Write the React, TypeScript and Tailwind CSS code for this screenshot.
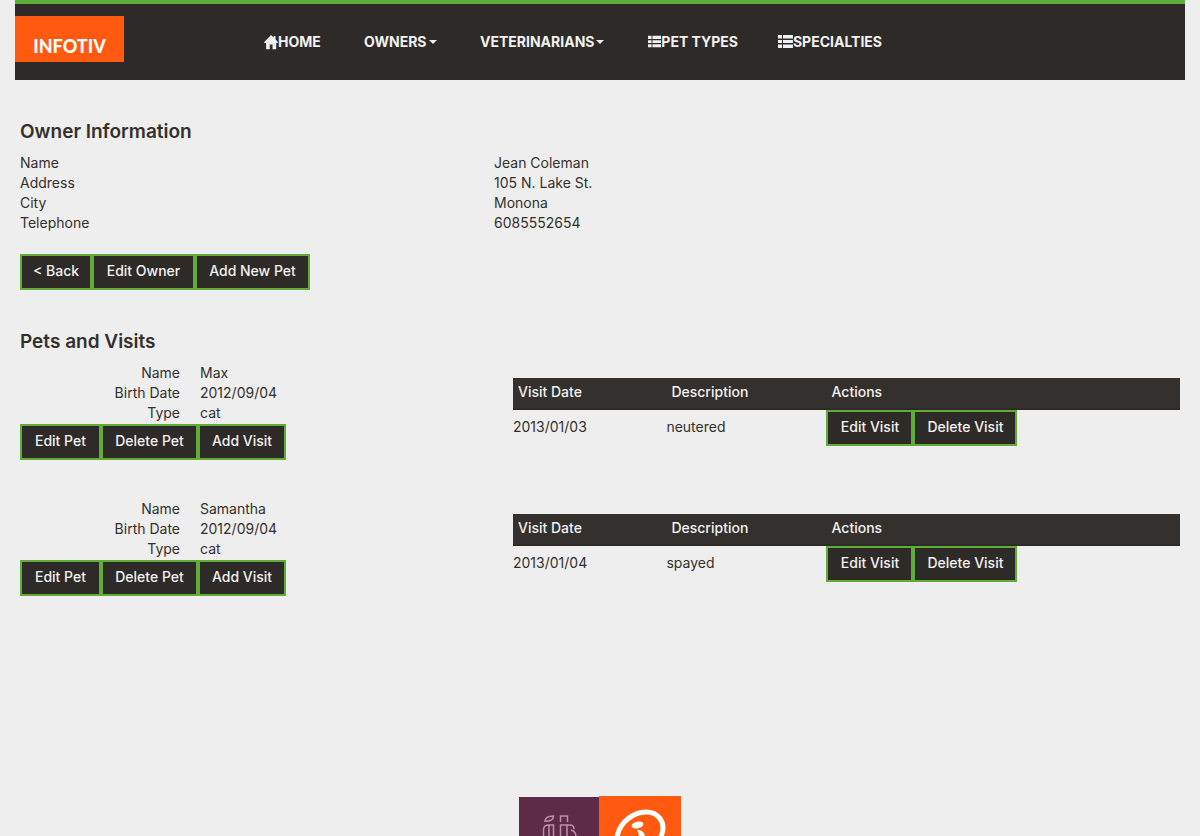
import React from "react";

type Pet = {
  name: string;
  birthDate: string;
  type: string;
  visits: { date: string; description: string }[];
};

const owner = [
  ["Name", "Jean Coleman"],
  ["Address", "105 N. Lake St."],
  ["City", "Monona"],
  ["Telephone", "6085552654"],
];

const pets: Pet[] = [
  {
    name: "Max",
    birthDate: "2012/09/04",
    type: "cat",
    visits: [{ date: "2013/01/03", description: "neutered" }],
  },
  {
    name: "Samantha",
    birthDate: "2012/09/04",
    type: "cat",
    visits: [{ date: "2013/01/04", description: "spayed" }],
  },
];

function ActionButton({ label, width }: { label: string; width: string }) {
  return (
    <button
      type="button"
      className={`h-9 shrink-0 whitespace-nowrap border-2 border-[#5fad37] bg-[#2e2a27] pb-0.5 text-center text-sm leading-5 font-medium text-[#f1f1f1] ${width}`}
    >
      {label}
    </button>
  );
}

function HomeIcon() {
  return (
    <svg width="14" height="15" viewBox="0 0 14 15" fill="currentColor" aria-hidden="true">
      <path d="M7 0 9.7 2.6V1.1h1.8v3.2L14 7.2l-.5.7h-1.3V14.2H8.5V9.6H5.8v4.6H2.1V7.9H.5L0 7.2Z" />
    </svg>
  );
}

function ListIcon() {
  return (
    <svg width="15" height="14" viewBox="0 0 15 14" fill="currentColor" aria-hidden="true">
      <path d="M0 0h4v3.5H0zM5 0h10v3.5H5zM0 4.9h4v3.2H0zM5 4.9h10v3.2H5zM0 9.5h4V13H0zM5 9.5h10V13H5z" />
    </svg>
  );
}

function Caret() {
  return (
    <svg className="ml-0.5" width="8" height="4" viewBox="0 0 8 4" fill="currentColor" aria-hidden="true">
      <path d="M0 0h8L4 4z" />
    </svg>
  );
}

function NavLink({
  label,
  icon,
  caret,
  width,
}: {
  label: string;
  icon?: React.ReactNode;
  caret?: boolean;
  width: string;
}) {
  return (
    <li className={width}>
      <a
        href="#"
        className="flex items-center whitespace-nowrap px-5 py-7 text-sm leading-5 font-bold text-[#f1f1f1]"
      >
        {icon}
        {label}
        {caret && <Caret />}
      </a>
    </li>
  );
}

function PetRow({ pet }: { pet: Pet }) {
  return (
    <div className="flex items-start">
      <div className="w-[42.5%] shrink-0">
        <dl className="grid grid-cols-[160px_1fr] gap-x-5 leading-5">
          <dt className="text-right">Name</dt>
          <dd>{pet.name}</dd>
          <dt className="text-right">Birth Date</dt>
          <dd>{pet.birthDate}</dd>
          <dt className="text-right">Type</dt>
          <dd>{pet.type}</dd>
        </dl>
        <div className="mt-px flex">
          <ActionButton label="Edit Pet" width="w-[81px]" />
          <ActionButton label="Delete Pet" width="w-[97px]" />
          <ActionButton label="Add Visit" width="w-[88px]" />
        </div>
      </div>
      <table className="mt-[15px] grow table-fixed border-separate border-spacing-0 text-left">
        <colgroup>
          <col className="w-[23%]" />
          <col className="w-[24%]" />
          <col />
        </colgroup>
        <thead>
          <tr className="bg-[#34302d] text-[#f1f1f1]">
            <th className="h-8 border-b-2 border-[#2e2a27] px-[5px] pt-0 pb-0.5 font-medium">Visit Date</th>
            <th className="h-8 border-b-2 border-[#2e2a27] px-[5px] pt-0 pb-0.5 font-medium">Description</th>
            <th className="h-8 border-b-2 border-[#2e2a27] px-[5px] pt-0 pb-0.5 font-medium">Actions</th>
          </tr>
        </thead>
        <tbody>
          {pet.visits.map((visit) => (
            <tr key={visit.date}>
              <td className="p-0 pb-0.5">{visit.date}</td>
              <td className="p-0 pb-0.5">{visit.description}</td>
              <td className="p-0">
                <div className="flex">
                  <ActionButton label="Edit Visit" width="w-[87px]" />
                  <ActionButton label="Delete Visit" width="w-[104px]" />
                </div>
              </td>
            </tr>
          ))}
        </tbody>
      </table>
    </div>
  );
}

export default function App() {
  return (
    <div className="flex min-h-screen flex-col bg-[#eeeeee] px-[15px] font-['Inter','Liberation_Sans',sans-serif] text-sm text-[#34302d]">
      <header className="flex border-t-4 border-[#5fad37] bg-[#2e2a27]">
        <div className="w-[229px] shrink-0 pt-3">
          <a
            href="#"
            className="flex h-[46px] w-[109px] items-end justify-center bg-[#ff5a0f] pb-1 font-['Lato',sans-serif] text-lg leading-6 font-black text-white"
          >
            INFOTIV
          </a>
        </div>
        <nav>
          <ul className="flex">
            <NavLink label="HOME" icon={<HomeIcon />} width="w-[100px]" />
            <NavLink label="OWNERS" caret width="w-[116px]" />
            <NavLink label="VETERINARIANS" caret width="w-[168px]" />
            <NavLink label="PET TYPES" icon={<ListIcon />} width="w-[130px]" />
            <NavLink label="SPECIALTIES" icon={<ListIcon />} width="w-[144px]" />
          </ul>
        </nav>
      </header>

      <main className="px-[5px] pt-10">
        <h2 className="py-0.5 text-[19px] leading-5 font-semibold">Owner Information</h2>
        <dl className="mt-[9px] grid grid-cols-[474px_1fr] leading-5">
          {owner.map(([label, value]) => (
            <React.Fragment key={label}>
              <dt>{label}</dt>
              <dd>{value}</dd>
            </React.Fragment>
          ))}
        </dl>
        <div className="mt-[21px] flex">
          <ActionButton label="< Back" width="w-[72px]" />
          <ActionButton label="Edit Owner" width="w-[103px]" />
          <ActionButton label="Add New Pet" width="w-[115px]" />
        </div>

        <h2 className="mt-10 py-0.5 text-[19px] leading-5 font-semibold">Pets and Visits</h2>
        <div className="mt-[9px] flex flex-col gap-[39px]">
          {pets.map((pet) => (
            <PetRow key={pet.name} pet={pet} />
          ))}
        </div>
      </main>

      <footer className="mt-auto flex h-10 items-start justify-center overflow-hidden">
        <svg className="mt-px" width="80" height="80" viewBox="0 0 80 80" aria-hidden="true">
          <path fill="#5e2a46" d="M0 0h80v80H0z" />
          <g fill="none" stroke="#b892a8" strokeWidth="1.5">
            <path d="M26 24.3c0-3.6 3-5.3 8.5-5.3 0 3.6-2.5 5.3-8.5 5.3ZM41.5 25v-6h7v6" />
            <path d="M24.5 40v-7q0-5 5-5h5v12M30 28v12M41.5 40V28h6.500v12M48 28h3q4 0 4 4M52 33q5 1 5 7" />
          </g>
        </svg>
        <svg width="82" height="82" viewBox="0 0 82 82" aria-hidden="true">
          <path fill="#ff5a0f" d="M0 0h82v82H0z" />
          <ellipse cx="41" cy="37.5" rx="25" ry="19" transform="rotate(-38 41 37.5)" fill="none" stroke="#fff" strokeWidth="5" />
          <ellipse cx="38.500" cy="29" rx="6" ry="3.300" transform="rotate(-12 38.500 29)" fill="#fff" />
          <path d="M38 33.500q8 1 8 8l-3 18h-8l5-18q0-5-2-8Z" fill="#fff" />
        </svg>
      </footer>
    </div>
  );
}
